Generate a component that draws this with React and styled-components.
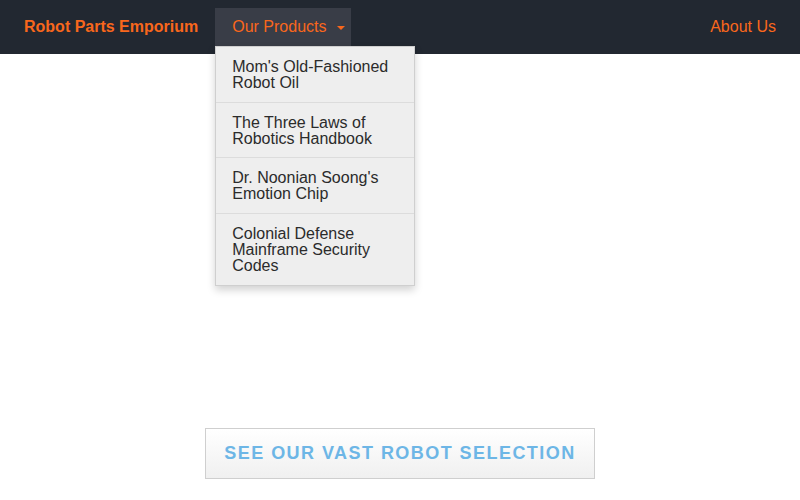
import React from "react";
import styled, { createGlobalStyle } from "styled-components";

const Global = createGlobalStyle`
  html, body { margin: 0; padding: 0; background: #fff; }
  body { font-family: "Liberation Sans", Arial, sans-serif; }
  * { box-sizing: border-box; }
`;

const Nav = styled.nav`
  height: 54px;
  background: #222831;
  display: flex;
  align-items: center;
  padding: 0 24px;
  position: relative;
  z-index: 10;
`;

const Brand = styled.a`
  color: #f9671c;
  font-weight: bold;
  font-size: 16px;
  margin-right: 17px;
  text-decoration: none;
`;

const NavItem = styled.div`
  position: relative;
  height: 38px;
  align-self: flex-end;
  margin-bottom: 8px;
  display: flex;
  align-items: center;
  padding: 0 6px 0 17px;
  background: ${(p) => (p.$active ? "#393d47" : "transparent")};
  color: #f9671c;
  font-size: 16px;
`;

const Caret = styled.span`
  display: inline-block;
  width: 0;
  height: 0;
  margin-left: 10px;
  margin-top: 2px;
  border-left: 4px solid transparent;
  border-right: 4px solid transparent;
  border-top: 4px solid #f9671c;
`;

const Spacer = styled.div`
  flex: 1;
`;

const NavLink = styled.a`
  color: #f9671c;
  font-size: 16px;
  text-decoration: none;
`;

const Menu = styled.ul`
  position: absolute;
  top: 38px;
  left: 0;
  width: 200px;
  margin: 0;
  padding: 0;
  list-style: none;
  background: #eeeeee;
  border: 1px solid #cfcfcf;
  box-shadow: 0 4px 8px rgba(0, 0, 0, 0.18);
`;

const MenuItem = styled.li`
  padding: 12px 16px ${(p) => (p.$last ? "11px" : "10.5px")} 16px;
  font-size: 16px;
  line-height: 16px;
  color: #2b2b2b;
  border-top: ${(p) => (p.$first ? "none" : "1px solid #dcdcdc")};
`;

const Main = styled.main`
  display: flex;
  justify-content: center;
  padding-top: 374px;
`;

const CTA = styled.button`
  width: 390px;
  height: 51px;
  border: 1px solid #cfcfcf;
  background: linear-gradient(#ffffff, #f0f0f0);
  color: #6db6e6;
  font-family: "Liberation Sans", Arial, sans-serif;
  font-weight: bold;
  font-size: 18px;
  letter-spacing: 1.45px;
  text-transform: uppercase;
  padding: 0;
  cursor: pointer;
`;

const items = [
  "Mom's Old-Fashioned Robot Oil",
  "The Three Laws of Robotics Handbook",
  "Dr. Noonian Soong's Emotion Chip",
  "Colonial Defense Mainframe Security Codes",
];

export default function App() {
  return (
    <>
      <Global />
      <Nav>
        <Brand>Robot Parts Emporium</Brand>
        <NavItem $active>
          Our Products
          <Caret />
          <Menu>
            {items.map((t, i) => (
              <MenuItem key={t} $first={i === 0} $last={i === items.length - 1}>
                {t}
              </MenuItem>
            ))}
          </Menu>
        </NavItem>
        <Spacer />
        <NavLink>About Us</NavLink>
      </Nav>
      <Main>
        <CTA>See our vast robot selection</CTA>
      </Main>
    </>
  );
}
